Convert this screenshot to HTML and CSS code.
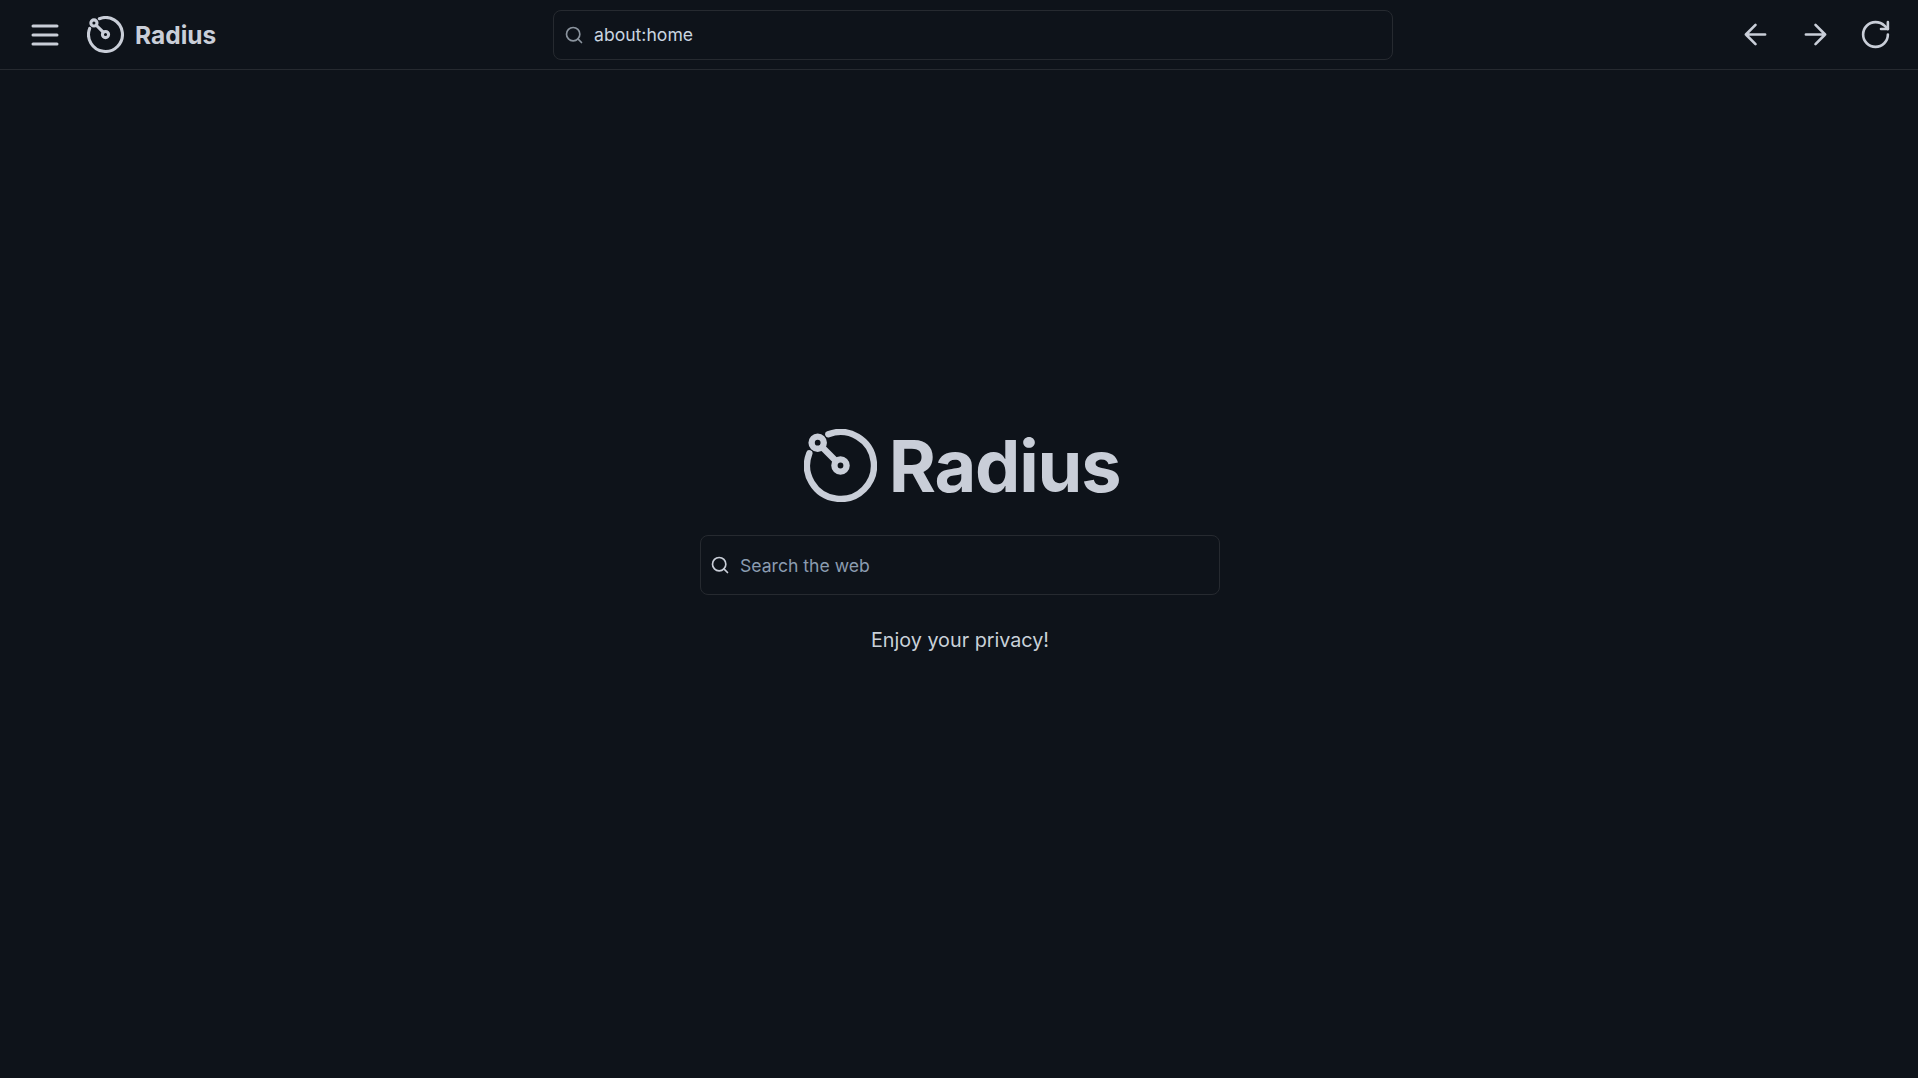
FILE: index.html
```html
<!DOCTYPE html>
<html lang="en">
<head>
    <meta charset="UTF-8"/>
    <meta content="width=device-width, initial-scale=1.0" name="viewport"/>
    <title>Radius</title>
    <link rel="stylesheet" href="styles.css">
</head>
<body>
<header class="top-bar">
    <div class="top-left">
        <svg class="icon menu-icon" viewBox="0 0 24 24"><path d="M4 6h16M4 12h16M4 18h16"/></svg>
        <svg class="brand-logo" viewBox="0 0 24 24"><path d="M8 1.75A11 11 0 1 1 1.75 8"/><circle cx="4.5" cy="4.5" r="2"/><circle cx="12" cy="12" r="2"/><path d="M6 6l4.5 4.5"/></svg>
        <span class="brand-name">Radius</span>
    </div>
    <div class="address-bar">
        <svg class="icon search-icon" viewBox="0 0 24 24"><circle cx="11" cy="11" r="8"/><path d="m21 21-4.3-4.3"/></svg>
        <span class="address-text">about:home</span>
    </div>
    <div class="top-right">
        <svg class="icon nav-icon" viewBox="0 0 24 24"><path d="m12 19-7-7 7-7M19 12H5"/></svg>
        <svg class="icon nav-icon" viewBox="0 0 24 24"><path d="M5 12h14M12 5l7 7-7 7"/></svg>
        <svg class="icon nav-icon" viewBox="0 0 24 24"><path d="M21 12a9 9 0 1 1-9-9c2.52 0 4.93 1 6.74 2.74L21 8"/><path d="M21 3v5h-5"/></svg>
    </div>
</header>

<main class="home">
    <div class="home-brand">
        <svg class="home-logo" viewBox="0 0 24 24"><path d="M8 1.75A11 11 0 1 1 1.75 8"/><circle cx="4.5" cy="4.5" r="2"/><circle cx="12" cy="12" r="2"/><path d="M6 6l4.5 4.5"/></svg>
        <h1 class="home-title">Radius</h1>
    </div>
    <div class="home-search">
        <svg class="icon search-icon light" viewBox="0 0 24 24"><circle cx="11" cy="11" r="8"/><path d="m21 21-4.3-4.3"/></svg>
        <span class="placeholder">Search the web</span>
    </div>
    <p class="home-note">Enjoy your privacy!</p>
</main>
</body>
</html>
```

FILE: styles.css
```css
/* Base styles */
body {
    margin: 0;
    height: 1078px;
    overflow: hidden;
    display: flex;
    flex-direction: column;
    background-color: #0e131a;
    color: #c9d1d9;
    font-family: Inter, "Noto Sans", sans-serif;
}

svg {
    fill: none;
    stroke: currentColor;
    stroke-linecap: round;
    stroke-linejoin: round;
}

.icon {
    width: 36px;
    height: 36px;
    stroke-width: 2;
    color: #c9ced8;
    flex-shrink: 0;
}

/* Top bar */
.top-bar {
    height: 69px;
    padding: 0 26px 0 27px;
    display: flex;
    align-items: center;
    border-bottom: 1px solid #262a30;
}

.top-left {
    display: flex;
    align-items: center;
    width: 526px;
}

.brand-logo {
    width: 37px;
    height: 37px;
    margin-left: 24px;
    stroke-width: 2;
    color: #c9ced8;
}

.brand-name {
    margin-left: 11px;
    font-size: 24.5px;
    font-weight: 700;
    color: #c9ced8;
}

.address-bar {
    width: 840px;
    height: 50px;
    box-sizing: border-box;
    display: flex;
    align-items: center;
    gap: 10px;
    padding-left: 10px;
    border: 1px solid #262a30;
    border-radius: 8px;
}

.search-icon {
    width: 20px;
    height: 20px;
    stroke-width: 2;
    color: #8b949e;
}

.search-icon.light {
    color: #c9ced8;
}

.address-text {
    font-size: 17.6px;
    color: #c9d5e0;
}

.top-right {
    display: flex;
    gap: 27px;
    margin-left: auto;
}

.nav-icon {
    width: 33px;
    height: 33px;
    stroke-width: 1.9;
}

/* Home */
.home {
    flex: 1;
    display: flex;
    flex-direction: column;
    align-items: center;
    padding: 357px 0 0 2px;
}

.home-brand {
    display: flex;
    align-items: center;
    gap: 12px;
    margin-left: 4px;
}

.home-logo {
    width: 73px;
    height: 73px;
    stroke-width: 2.1;
    color: #c9ced8;
}

.home-title {
    margin: 1px 0 -1px;
    font-size: 72px;
    line-height: 76px;
    font-weight: 700;
    letter-spacing: -1.2px;
    color: #c9ced8;
}

.home-search {
    width: 520px;
    height: 60px;
    margin-top: 32px;
    box-sizing: border-box;
    display: flex;
    align-items: center;
    gap: 10px;
    padding-left: 9px;
    border: 1px solid #262a30;
    border-radius: 8px;
}

.placeholder {
    font-size: 17.6px;
    color: #8b9cb0;
}

.home-note {
    margin: 31px 0 0;
    font-size: 19.75px;
    line-height: 28px;
    color: #c9d1d9;
}
```
